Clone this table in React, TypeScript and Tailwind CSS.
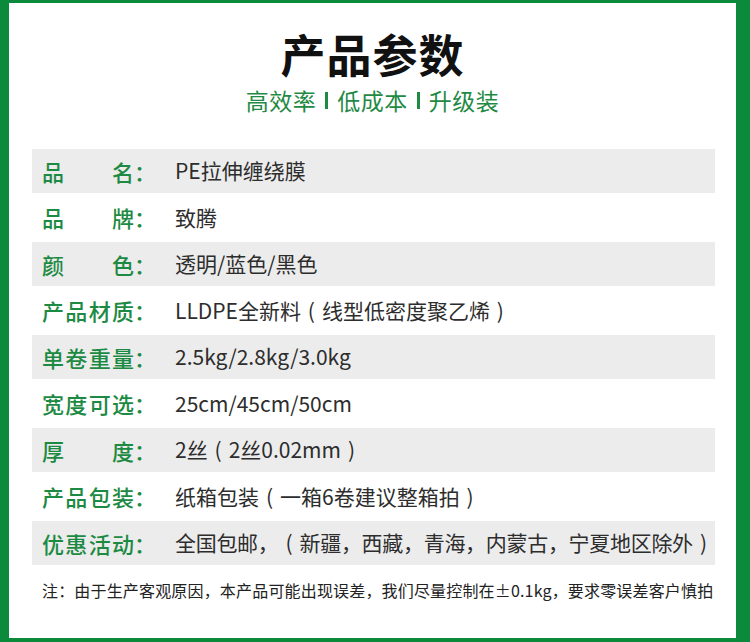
import React from "react";

const rows: { label: string[]; value: string }[] = [
  { label: ["品", "名"], value: "PE拉伸缠绕膜" },
  { label: ["品", "牌"], value: "致腾" },
  { label: ["颜", "色"], value: "透明/蓝色/黑色" },
  { label: ["产", "品", "材", "质"], value: "LLDPE全新料（线型低密度聚乙烯）" },
  { label: ["单", "卷", "重", "量"], value: "2.5kg/2.8kg/3.0kg" },
  { label: ["宽", "度", "可", "选"], value: "25cm/45cm/50cm" },
  { label: ["厚", "度"], value: "2丝（2丝0.02mm）" },
  { label: ["产", "品", "包", "装"], value: "纸箱包装（一箱6卷建议整箱拍）" },
  { label: ["优", "惠", "活", "动"], value: "全国包邮，（新疆，西藏，青海，内蒙古，宁夏地区除外）" },
];

function Value({ text, tight }: { text: string; tight: boolean }) {
  const parts = text.split(/([（）])/);
  return (
    <div
      className={
        tight
          ? "text-[21px] text-[#2d2d2d] whitespace-nowrap flex items-center shrink-0 tracking-[-0.3px]"
          : "text-[21px] text-[#2d2d2d] whitespace-nowrap flex items-center shrink-0"
      }
    >
      {parts.map((p, i) =>
        p === "（" || p === "）" ? (
          <span key={i} className="inline-block w-[21px] text-center">
            {p === "（" ? "(" : ")"}
          </span>
        ) : (
          <span key={i}>{p}</span>
        )
      )}
    </div>
  );
}

export default function App() {
  return (
    <div
      className="w-[750px] h-[642px] bg-white border-l-[9px] border-r-[14px] border-t-[3px] border-b-[4px] border-[#0b8a3c] flex flex-col [text-spacing-trim:space-all]"
      style={{ fontFamily: '"Noto Sans CJK SC", "Noto Sans", sans-serif' }}
    >
      <div className="pt-[27px] text-center text-[45px] leading-[48px] font-bold text-[#111] tracking-[1px]">
        产品参数
      </div>
      <div className="mt-[8px] flex items-center justify-center text-[23px] leading-[28px] text-[#1f8a44] tracking-[0.5px]">
        <span>高效率</span>
        <span className="inline-block w-[3px] h-[17px] bg-[#1f8a44] mx-[9px]" />
        <span>低成本</span>
        <span className="inline-block w-[3px] h-[17px] bg-[#1f8a44] mx-[9px]" />
        <span>升级装</span>
      </div>
      <div className="mt-[35px] ml-[23px] mr-[21px] flex flex-col">
        {rows.map((r, i) => (
          <div
            key={i}
            className={
              i % 2 === 0
                ? "h-[44px] bg-[#ececec] flex items-center pl-[10px]"
                : "h-[49px] flex items-center pl-[10px]"
            }
          >
            <div className="w-[133px] shrink-0 flex items-center text-[22px] font-medium text-[#1d8a43]">
              <div className="w-[92px] flex justify-between">
                {r.label.map((c, j) => (
                  <span key={j}>{c}</span>
                ))}
              </div>
              <span>：</span>
            </div>
            <Value text={r.value} tight={i === rows.length - 1} />
          </div>
        ))}
      </div>
      <div className="mt-[13px] pl-[33px] text-[16px] leading-[24px] text-[#222] whitespace-nowrap tracking-[0.17px]">
        注：由于生产客观原因，本产品可能出现误差，我们尽量控制在±0.1kg，要求零误差客户慎拍
      </div>
    </div>
  );
}
